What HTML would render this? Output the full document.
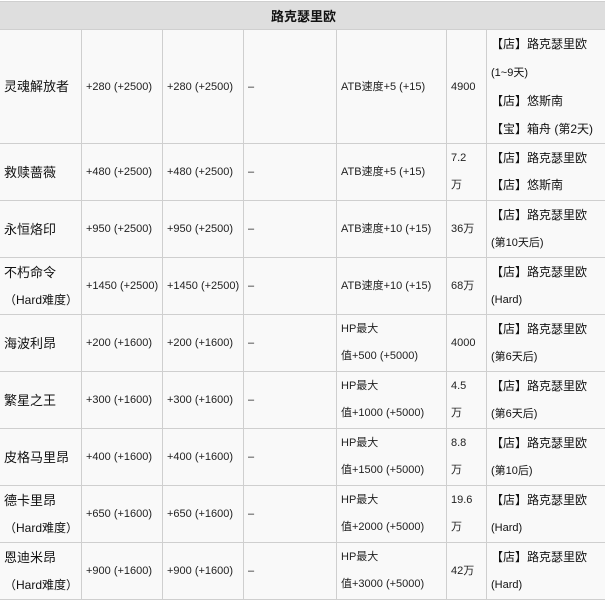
<!DOCTYPE html>
<html><head><meta charset="utf-8"><style>
body{margin:0;background:#fff;font-family:"Liberation Sans","Noto Sans CJK SC",sans-serif;}
table{position:absolute;left:-1px;top:1px;border-collapse:collapse;table-layout:fixed;width:608px;}
td{border:1px solid #cfcfcf;background:#f9f9f9;padding:0 0 0 4px;font-size:11px;color:#222;line-height:28px;vertical-align:middle;white-space:nowrap;overflow:hidden;}
td.n{font-size:13px;color:#111;}
th{background:#dedede;border:1px solid #cfcfcf;height:27px;padding:0;font-size:13px;font-weight:bold;color:#111;}
td.s{font-size:12px;color:#111;}
tr.r td{height:56px;line-height:27px;padding-top:0;padding-bottom:0;}
</style></head><body>
<table>
<colgroup><col style="width:82px"><col style="width:81px"><col style="width:81px"><col style="width:93px"><col style="width:110px"><col style="width:40px"><col style="width:121px"></colgroup>
<tr><th colspan="7">路克瑟里欧</th></tr>
<tr><td class="n" style="height:110px">灵魂解放者</td><td>+280 (+2500)</td><td>+280 (+2500)</td><td>–</td><td>ATB速度+5 (+15)</td><td>4900</td><td class="s">【店】路克瑟里欧<br><span style="font-size:11px">(1~9天)</span><br>【店】悠斯南<br>【宝】箱舟 (第2天)</td></tr>
<tr class="r"><td class="n">救赎蔷薇</td><td>+480 (+2500)</td><td>+480 (+2500)</td><td>–</td><td>ATB速度+5 (+15)</td><td>7.2<br>万</td><td class="s">【店】路克瑟里欧<br>【店】悠斯南</td></tr>
<tr class="r"><td class="n">永恒烙印</td><td>+950 (+2500)</td><td>+950 (+2500)</td><td>–</td><td>ATB速度+10 (+15)</td><td>36万</td><td class="s">【店】路克瑟里欧<br><span style="font-size:11px">(第10天后)</span></td></tr>
<tr class="r"><td class="n">不朽命令<br><span style="font-size:12px">（Hard难度）</span></td><td>+1450 (+2500)</td><td>+1450 (+2500)</td><td>–</td><td>ATB速度+10 (+15)</td><td>68万</td><td class="s">【店】路克瑟里欧<br><span style="font-size:11px">(Hard)</span></td></tr>
<tr class="r"><td class="n">海波利昂</td><td>+200 (+1600)</td><td>+200 (+1600)</td><td>–</td><td>HP最大<br>值+500 (+5000)</td><td>4000</td><td class="s">【店】路克瑟里欧<br><span style="font-size:11px">(第6天后)</span></td></tr>
<tr class="r"><td class="n">繁星之王</td><td>+300 (+1600)</td><td>+300 (+1600)</td><td>–</td><td>HP最大<br>值+1000 (+5000)</td><td>4.5<br>万</td><td class="s">【店】路克瑟里欧<br><span style="font-size:11px">(第6天后)</span></td></tr>
<tr class="r"><td class="n">皮格马里昂</td><td>+400 (+1600)</td><td>+400 (+1600)</td><td>–</td><td>HP最大<br>值+1500 (+5000)</td><td>8.8<br>万</td><td class="s">【店】路克瑟里欧<br><span style="font-size:11px">(第10后)</span></td></tr>
<tr class="r"><td class="n">德卡里昂<br><span style="font-size:12px">（Hard难度）</span></td><td>+650 (+1600)</td><td>+650 (+1600)</td><td>–</td><td>HP最大<br>值+2000 (+5000)</td><td>19.6<br>万</td><td class="s">【店】路克瑟里欧<br><span style="font-size:11px">(Hard)</span></td></tr>
<tr class="r"><td class="n">恩迪米昂<br><span style="font-size:12px">（Hard难度）</span></td><td>+900 (+1600)</td><td>+900 (+1600)</td><td>–</td><td>HP最大<br>值+3000 (+5000)</td><td>42万</td><td class="s">【店】路克瑟里欧<br><span style="font-size:11px">(Hard)</span></td></tr>
</table>
</body></html>
